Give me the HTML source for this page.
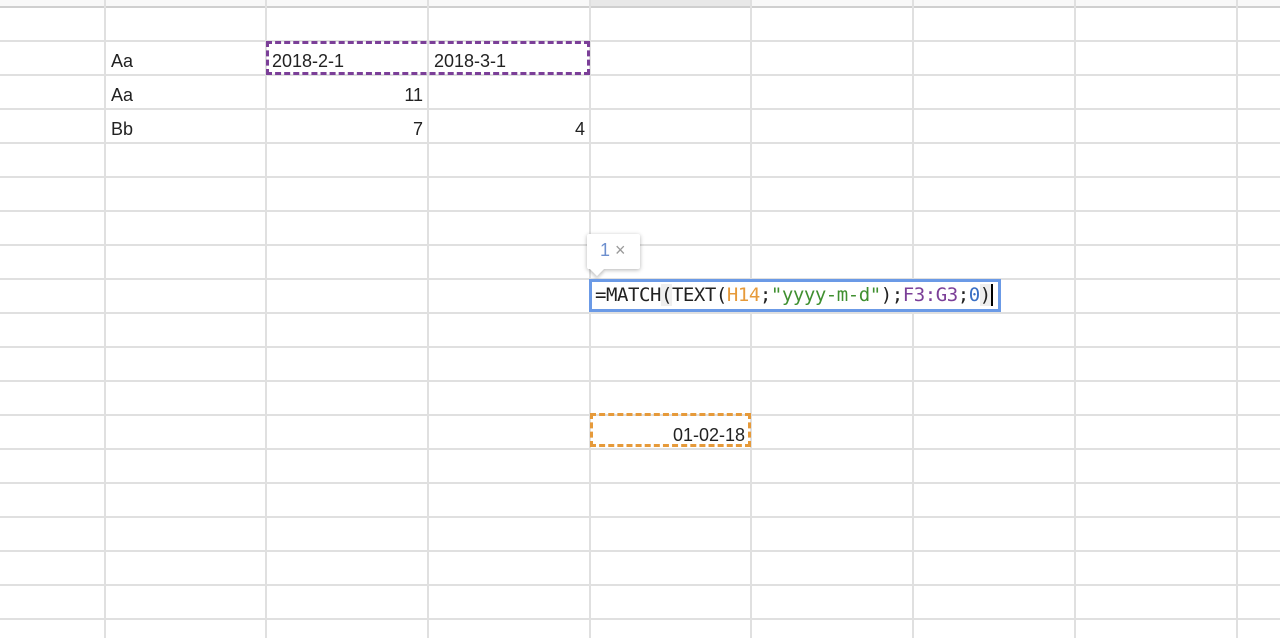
<!DOCTYPE html>
<html><head><style>
body{margin:0;width:1280px;height:638px;background:#fff;position:relative;overflow:hidden;font-family:"Liberation Sans",Arial,sans-serif;}
.h{position:absolute;left:0;width:1280px;height:2px;background:#e0e0e0}
.v{position:absolute;top:0;height:638px;width:2px;background:#e0e0e0}
.t{position:absolute;font-size:18px;color:#222;line-height:20px}
</style></head><body>
<div style="position:absolute;left:0;top:0;width:1280px;height:6px;background:#f8f8f8"></div>
<div style="position:absolute;left:590px;top:0;width:161px;height:6px;background:#e8e8e8"></div>
<div class="h" style="top:6px;height:2px;background:#cfcfcf"></div>
<script>
for(let y=40;y<630;y+=34)document.write('<div class="h" style="top:'+y+'px"></div>');
[104,265,427,589,750,912,1074,1236].forEach(x=>document.write('<div class="v" style="left:'+x+'px"></div>'));
</script>
<div class="t" style="left:111px;top:51px">Aa</div>
<div class="t" style="left:111px;top:85px">Aa</div>
<div class="t" style="left:111px;top:119px">Bb</div>
<div class="t" style="left:272px;top:51px">2018-2-1</div>
<div class="t" style="left:434px;top:51px">2018-3-1</div>
<div class="t" style="left:266px;width:157px;text-align:right;top:85px">11</div>
<div class="t" style="left:266px;width:157px;text-align:right;top:119px">7</div>
<div class="t" style="left:428px;width:157px;text-align:right;top:119px">4</div>
<div style="position:absolute;left:266px;top:41px;width:318px;height:28px;border:3px dashed #7b3f98"></div>
<div style="position:absolute;left:590px;top:413px;width:155px;height:28px;border:3px dashed #e69a3a"></div>
<div class="t" style="left:590px;width:155px;text-align:right;top:425px">01-02-18</div>
<div style="position:absolute;left:587px;top:234px;width:53px;height:35px;background:#fff;box-shadow:0 1px 4px rgba(0,0,0,.3);border-radius:2px"></div>
<div style="position:absolute;left:592px;top:264px;width:10px;height:10px;background:#fff;transform:rotate(45deg);box-shadow:2px 2px 3px rgba(0,0,0,.2)"></div>
<div style="position:absolute;left:588px;top:259px;width:30px;height:10px;background:#fff"></div>
<div style="position:absolute;left:600px;top:240px;font-size:18px;color:#6d8fce">1 <span style="color:#999">×</span></div>
<div style="position:absolute;left:589px;top:279px;width:403px;height:27px;border:3px solid #6b9ae6;background:#fff;font-family:'DejaVu Sans Mono','Liberation Mono',monospace;font-size:19px;line-height:27px;color:#222;letter-spacing:-0.45px;padding-left:3px;white-space:nowrap;overflow:hidden">=MATCH<span style="background:#eee">(</span>TEXT(<span style="color:#e69a3a">H14</span>;<span style="color:#3f8f2f">"yyyy-m-d"</span>);<span style="color:#7b3f98">F3:G3</span>;<span style="color:#3a6fc4">0</span><span style="background:#eee">)</span><span style="border-left:2px solid #000"></span></div>
</body></html>
